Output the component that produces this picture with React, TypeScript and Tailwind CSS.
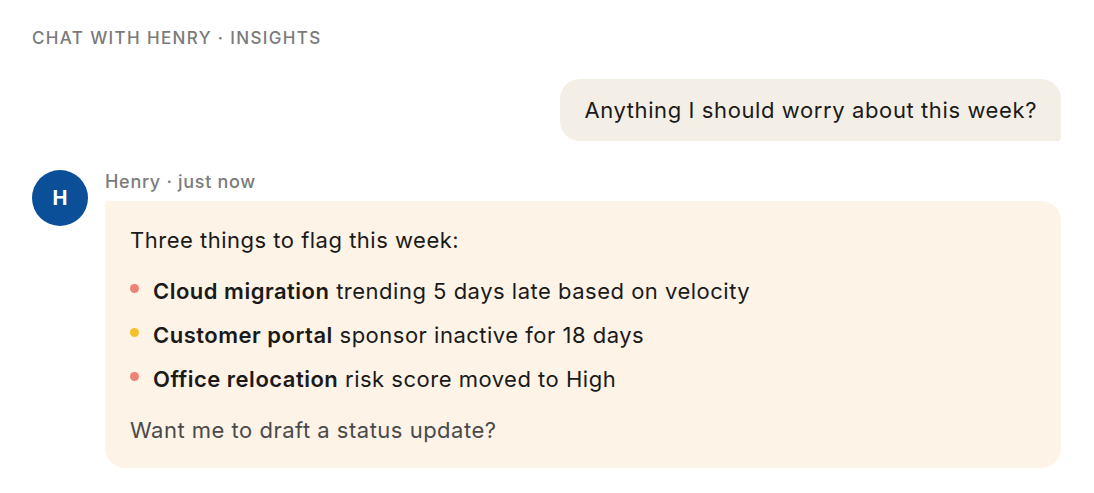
const items = [
  { dot: 'bg-[#ec8376]', title: 'Cloud migration', rest: 'trending 5 days late based on velocity' },
  { dot: 'bg-[#f6c02c]', title: 'Customer portal', rest: 'sponsor inactive for 18 days' },
  { dot: 'bg-[#ec8376]', title: 'Office relocation', rest: 'risk score moved to High' },
];

export default function App() {
  return (
    <div className="min-h-screen bg-white pl-8 pr-[33px] pt-[26px] font-['Inter',sans-serif] text-[#1a1a1a]">
      {/* Section label */}
      <div className="text-[17px] font-medium uppercase leading-6 tracking-[0.08em] text-[#7a7a7a]">
        Chat with Henry · Insights
      </div>

      {/* User message */}
      <div className="mt-[29px] flex justify-end">
        <div className="rounded-[20px] rounded-br-[4px] bg-[#f3efe6] px-6 py-[17px] text-[22px] leading-7 tracking-[0.6px]">
          Anything I should worry about this week?
        </div>
      </div>

      {/* Assistant message */}
      <div className="mt-[29px] flex gap-[17px]">
        <div className="flex h-14 w-14 shrink-0 items-center justify-center rounded-full bg-[#0b4f99] text-[20px] font-bold text-white">
          H
        </div>
        <div className="flex-1">
          <div className="text-[18px] font-medium leading-6 tracking-[0.7px] text-[#7b7b7b]">Henry · just now</div>
          <div className="mt-[7px] rounded-[20px] rounded-tl-[4px] bg-[#fdf3e7] pl-[25px] pr-6 pt-[25px] pb-6 text-[22px] leading-7 tracking-[0.5px]">
            <p>Three things to flag this week:</p>
            <ul className="mt-[23px] flex flex-col gap-4">
              {items.map((item) => (
                <li key={item.title} className="flex items-center gap-[14px]">
                  <span className={`h-[9px] w-[9px] shrink-0 -translate-y-[3px] rounded-full ${item.dot}`} />
                  <span>
                    <span className="font-semibold">{item.title}</span> {item.rest}
                  </span>
                </li>
              ))}
            </ul>
            <p className="mt-[23px] text-[#4a4a4a]">Want me to draft a status update?</p>
          </div>
        </div>
      </div>
    </div>
  );
}
